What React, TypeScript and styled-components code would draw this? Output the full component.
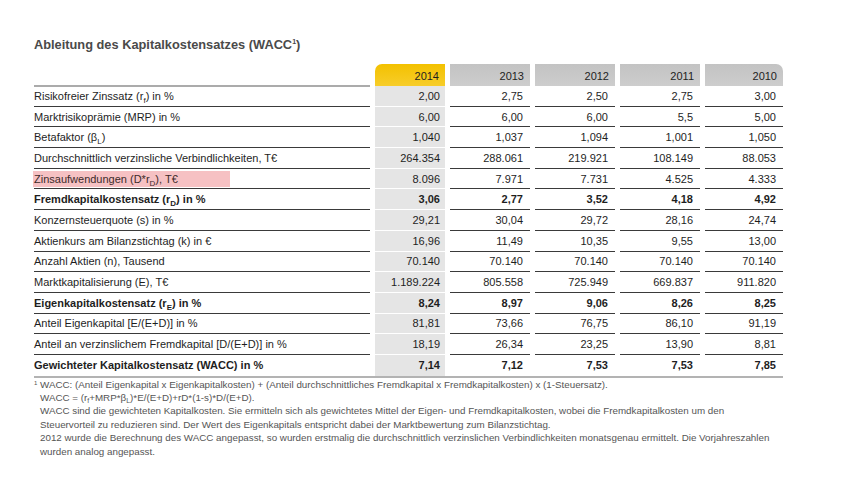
import React from 'react';
import styled, { createGlobalStyle } from 'styled-components';

type Row = {
  label: React.ReactNode;
  values: string[];
  bold?: boolean;
  marked?: boolean;
};

const years = ['2014', '2013', '2012', '2011', '2010'];

const rows: Row[] = [
  { label: <>Risikofreier Zinssatz (r<sub>f</sub>) in %</>, values: ['2,00', '2,75', '2,50', '2,75', '3,00'] },
  { label: <>Marktrisikoprämie (MRP) in %</>, values: ['6,00', '6,00', '6,00', '5,5', '5,00'] },
  { label: <>Betafaktor (β<sub>L</sub>)</>, values: ['1,040', '1,037', '1,094', '1,001', '1,050'] },
  { label: <>Durchschnittlich verzinsliche Verbindlichkeiten, T€</>, values: ['264.354', '288.061', '219.921', '108.149', '88.053'] },
  { label: <>Zinsaufwendungen (D*r<sub>D</sub>), T€</>, values: ['8.096', '7.971', '7.731', '4.525', '4.333'], marked: true },
  { label: <>Fremdkapitalkostensatz (r<sub>D</sub>) in %</>, values: ['3,06', '2,77', '3,52', '4,18', '4,92'], bold: true },
  { label: <>Konzernsteuerquote (s) in %</>, values: ['29,21', '30,04', '29,72', '28,16', '24,74'] },
  { label: <>Aktienkurs am Bilanzstichtag (k) in €</>, values: ['16,96', '11,49', '10,35', '9,55', '13,00'] },
  { label: <>Anzahl Aktien (n), Tausend</>, values: ['70.140', '70.140', '70.140', '70.140', '70.140'] },
  { label: <>Marktkapitalisierung (E), T€</>, values: ['1.189.224', '805.558', '725.949', '669.837', '911.820'] },
  { label: <>Eigenkapitalkostensatz (r<sub>E</sub>) in %</>, values: ['8,24', '8,97', '9,06', '8,26', '8,25'], bold: true },
  { label: <>Anteil Eigenkapital [E/(E+D)] in %</>, values: ['81,81', '73,66', '76,75', '86,10', '91,19'] },
  { label: <>Anteil an verzinslichem Fremdkapital [D/(E+D)] in %</>, values: ['18,19', '26,34', '23,25', '13,90', '8,81'] },
  { label: <>Gewichteter Kapitalkostensatz (WACC) in %</>, values: ['7,14', '7,12', '7,53', '7,53', '7,85'], bold: true },
];

const App = () => (
  <Page>
    <GlobalStyle />
    <Title>
      Ableitung des Kapitalkostensatzes (WACC<sup>1</sup>)
    </Title>
    <Table>
      <HeaderRow>
        <HeaderLabel />
        {years.map((year, i) => (
          <YearCell key={year} $current={i === 0} $last={i === years.length - 1}>
            {year}
          </YearCell>
        ))}
      </HeaderRow>
      {rows.map((row, r) => {
        const total = r === rows.length - 1;
        return (
          <DataRow key={r} $total={total} $bold={row.bold}>
            <LabelCell $total={total}>
              {row.marked ? <Marker>{row.label}</Marker> : <span>{row.label}</span>}
            </LabelCell>
            {row.values.map((v, i) => (
              <ValueCell key={i} $current={i === 0} $total={total}>
                {v}
              </ValueCell>
            ))}
          </DataRow>
        );
      })}
    </Table>
    <Notes>
      <NoteLine>
        <NoteMark>1</NoteMark>WACC: (Anteil Eigenkapital x Eigenkapitalkosten) + (Anteil durchschnittliches Fremdkapital x Fremdkapitalkosten) x (1-Steuersatz).
      </NoteLine>
      <NoteLine>
        WACC = (r<sub>f</sub>+MRP*β<sub>L</sub>)*E/(E+D)+rD*(1-s)*D/(E+D).
      </NoteLine>
      <NoteLine>
        WACC sind die gewichteten Kapitalkosten. Sie ermitteln sich als gewichtetes Mittel der Eigen- und Fremdkapitalkosten, wobei die Fremdkapitalkosten um den
      </NoteLine>
      <NoteLine>
        Steuervorteil zu reduzieren sind. Der Wert des Eigenkapitals entspricht dabei der Marktbewertung zum Bilanzstichtag.
      </NoteLine>
      <NoteLine>
        2012 wurde die Berechnung des WACC angepasst, so wurden erstmalig die durchschnittlich verzinslichen Verbindlichkeiten monatsgenau ermittelt. Die Vorjahreszahlen
      </NoteLine>
      <NoteLine>wurden analog angepasst.</NoteLine>
    </Notes>
  </Page>
);

const GlobalStyle = createGlobalStyle`
  html, body {
    margin: 0;
    background: #ffffff;
  }
  body {
    font-family: "Liberation Sans", Arial, sans-serif;
    color: #222;
  }
`;

const Page = styled.div`
  width: 850px;
  height: 501px;
  box-sizing: border-box;
  padding: 38px 0 0 34px;
`;

const Title = styled.div`
  font-size: 12.8px;
  font-weight: 700;
  color: #4a4a4a;
  line-height: 14px;
  margin-bottom: 12px;

  sup {
    font-size: 7px;
    vertical-align: 5px;
    line-height: 0;
  }
`;

const Table = styled.div`
  width: 749px;
`;

const columns = `
  display: grid;
  grid-template-columns: 336px 70px 80px 80px 80px 78px;
  column-gap: 5px;
`;

const HeaderRow = styled.div`
  ${columns}
  height: 22px;
`;

const HeaderLabel = styled.div`
  align-self: end;
  border-bottom: 2px solid #ababab;
  margin-bottom: -1px;
`;

const YearCell = styled.div<{ $current?: boolean; $last?: boolean }>`
  display: flex;
  align-items: flex-end;
  justify-content: flex-end;
  padding: 0 6px 4px 0;
  font-size: 11px;
  color: #1e1e1e;
  background: ${(p) =>
    p.$current
      ? 'linear-gradient(#f3c100, #f7cd2a)'
      : 'linear-gradient(#c3c3c3, #cdcdcd)'};
  border-top-left-radius: ${(p) => (p.$current ? '7px' : '0')};
  border-top-right-radius: ${(p) => (p.$last ? '7px' : '0')};
`;

const DataRow = styled.div<{ $total?: boolean; $bold?: boolean }>`
  ${columns}
  height: 20.7px;
  font-size: 11px;
  font-weight: ${(p) => (p.$bold ? 700 : 400)};
  border-bottom: ${(p) => (p.$total ? '2px solid #b3b3b3' : 'none')};
`;

const LabelCell = styled.div<{ $total?: boolean }>`
  display: flex;
  align-items: center;
  white-space: nowrap;
  color: #1e1e1e;
  border-bottom: ${(p) => (p.$total ? 'none' : '1px solid #3a3a3a')};

  sub {
    font-size: 8px;
    vertical-align: -3px;
    line-height: 0;
  }
`;

const Marker = styled.span`
  display: inline-block;
  width: 196px;
  margin-left: -1px;
  padding: 2px 0 2px 1px;
  background: #f6c1c3;
  color: #3c2a2a;
`;

const ValueCell = styled.div<{ $current?: boolean; $total?: boolean }>`
  display: flex;
  align-items: center;
  justify-content: flex-end;
  padding-right: ${(p) => (p.$current ? '5px' : '7px')};
  color: #1e1e1e;
  background: ${(p) => (p.$current ? '#e5e5e5' : 'transparent')};
  border-bottom: ${(p) =>
    p.$total ? 'none' : p.$current ? '1px solid #ffffff' : '1px solid #3a3a3a'};
`;

const Notes = styled.div`
  margin-top: 0;
  font-size: 9.8px;
  line-height: 13.4px;
  color: #555;
  padding-left: 6px;
`;

const NoteLine = styled.div`
  white-space: nowrap;

  sub {
    font-size: 7px;
    vertical-align: -2px;
    line-height: 0;
  }
`;

const NoteMark = styled.span`
  display: inline-block;
  width: 6px;
  margin-left: -6px;
  font-size: 6px;
  vertical-align: 3px;
  line-height: 0;
`;

export default App;
